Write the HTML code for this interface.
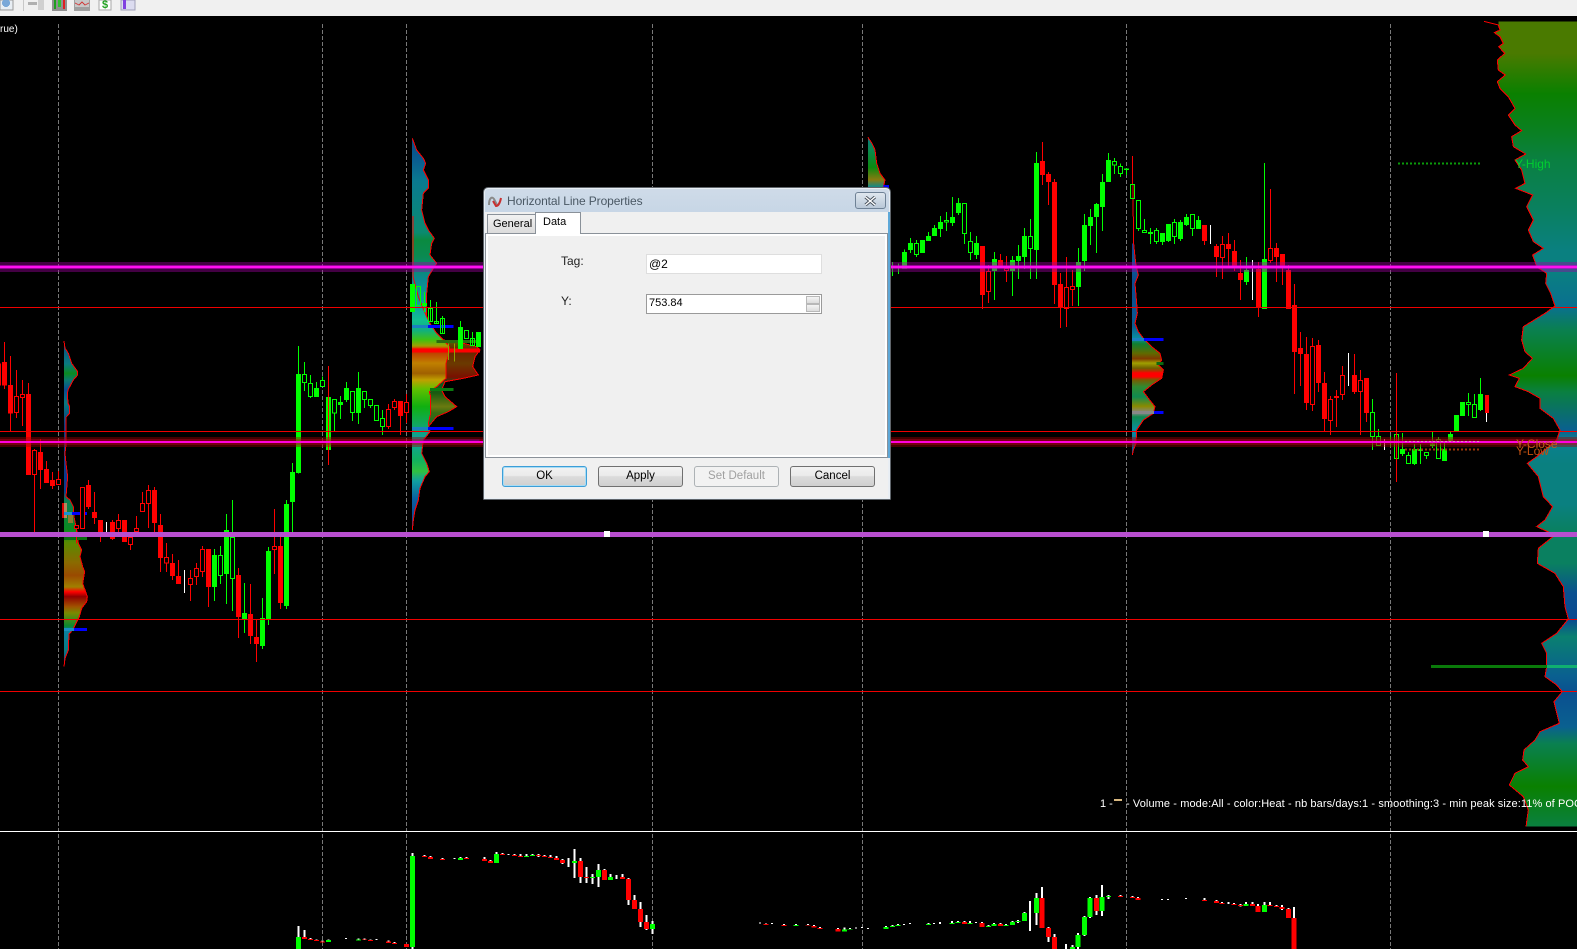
<!DOCTYPE html>
<html><head><meta charset="utf-8"><title>Chart</title>
<style>
html,body{margin:0;padding:0;background:#000;width:1577px;height:949px;overflow:hidden;font-family:"Liberation Sans",sans-serif}
#c{position:absolute;left:0;top:0}
path{fill:none}
polyline{fill:none;stroke:#f00;stroke-width:3}
.gw{stroke:#0f0;stroke-width:3}.rw{stroke:#f00;stroke-width:3}.ww{stroke:#fff;stroke-width:3}
.gb{stroke:#0f0;stroke-width:15}.rb{stroke:#f00;stroke-width:15}
.gh{stroke:#0f0;stroke-width:3;fill:#000}.rh{stroke:#f00;stroke-width:3;fill:#000}
.gn{stroke:#0f0;stroke-width:3;fill:none}
.a{position:absolute;box-sizing:border-box}
.btn{position:absolute;box-sizing:border-box;top:466px;height:21px;width:85px;border:1px solid #707070;border-radius:3px;background:linear-gradient(#f2f2f2 0%,#ebebeb 45%,#dcdcdc 50%,#cfcfcf 100%);font-size:11.5px;text-align:center;line-height:18px;color:#000}
</style></head><body>
<svg id="c" width="1577" height="949" viewBox="0 0 1577 949" shape-rendering="crispEdges" xmlns="http://www.w3.org/2000/svg">
<defs>
<linearGradient id="p1" gradientUnits="userSpaceOnUse" x1="0" y1="33" x2="0" y2="1010">
<stop offset="0" stop-color="#0a4a80"/><stop offset=".07" stop-color="#0a7a80"/><stop offset=".1" stop-color="#0b8a20"/><stop offset=".12" stop-color="#0a7a70"/><stop offset=".15" stop-color="#0a4a90"/><stop offset=".19" stop-color="#0a7a80"/><stop offset=".26" stop-color="#0a3a80"/><stop offset=".46" stop-color="#0a3a90"/><stop offset=".49" stop-color="#0a8050"/><stop offset=".58" stop-color="#0a8a20"/><stop offset=".62" stop-color="#5a8a00"/><stop offset=".68" stop-color="#8a6a00"/><stop offset=".72" stop-color="#9a4a00"/><stop offset=".755" stop-color="#a08000"/><stop offset=".77" stop-color="#ff0000"/><stop offset=".785" stop-color="#900000"/><stop offset=".815" stop-color="#a05000"/><stop offset=".835" stop-color="#7a8a00"/><stop offset=".875" stop-color="#0a8a30"/><stop offset=".89" stop-color="#0a80a0"/><stop offset=".95" stop-color="#0a7a80"/><stop offset="1" stop-color="#0a4a90"/>
</linearGradient>
<linearGradient id="p2" gradientUnits="userSpaceOnUse" x1="0" y1="25" x2="0" y2="1200">
<stop offset="0" stop-color="#0a4a80"/><stop offset=".05" stop-color="#0a5a90"/><stop offset=".11" stop-color="#0a7a90"/><stop offset=".24" stop-color="#0a8a70"/><stop offset=".26" stop-color="#0a8a40"/><stop offset=".3" stop-color="#0a8a50"/><stop offset=".36" stop-color="#0a8a90"/><stop offset=".43" stop-color="#10a0a0"/><stop offset=".463" stop-color="#10c090"/><stop offset=".49" stop-color="#10b080"/><stop offset=".515" stop-color="#40c010"/><stop offset=".53" stop-color="#a0a000"/><stop offset=".54" stop-color="#ff0000"/><stop offset=".548" stop-color="#c04000"/><stop offset=".574" stop-color="#c08000"/><stop offset=".6" stop-color="#a06000"/><stop offset=".617" stop-color="#c0a000"/><stop offset=".64" stop-color="#60c000"/><stop offset=".685" stop-color="#10b010"/><stop offset=".73" stop-color="#10a860"/><stop offset=".77" stop-color="#10a0a0"/><stop offset=".82" stop-color="#10b060"/><stop offset=".85" stop-color="#30c040"/><stop offset=".875" stop-color="#10a0a0"/><stop offset=".92" stop-color="#0a60a0"/><stop offset="1" stop-color="#0a3a90"/>
</linearGradient>
<linearGradient id="p2b" gradientUnits="userSpaceOnUse" x1="0" y1="630" x2="0" y2="900">
<stop offset="0" stop-color="#556a00"/><stop offset=".11" stop-color="#6a2000"/><stop offset=".26" stop-color="#6a3a00"/><stop offset=".41" stop-color="#7a1000"/><stop offset=".48" stop-color="#0a5a20"/><stop offset=".59" stop-color="#1a5a10"/><stop offset=".74" stop-color="#6a7a10"/><stop offset=".81" stop-color="#3a6a10"/><stop offset="1" stop-color="#0a6a30"/>
</linearGradient>
<linearGradient id="p3" gradientUnits="userSpaceOnUse" x1="0" y1="22" x2="0" y2="172">
<stop offset="0" stop-color="#0a7a80"/><stop offset=".25" stop-color="#0a8a50"/><stop offset=".6" stop-color="#0a8a10"/><stop offset=".85" stop-color="#8a7a10"/><stop offset="1" stop-color="#0a8a90"/>
</linearGradient>
<linearGradient id="p4" gradientUnits="userSpaceOnUse" x1="0" y1="280" x2="0" y2="915">
<stop offset="0" stop-color="#0a3a90"/><stop offset=".095" stop-color="#0a5a90"/><stop offset=".19" stop-color="#0a4a90"/><stop offset=".39" stop-color="#0a5a90"/><stop offset=".45" stop-color="#0a90a0"/><stop offset=".475" stop-color="#108030"/><stop offset=".52" stop-color="#606a00"/><stop offset=".545" stop-color="#803a00"/><stop offset=".566" stop-color="#a0a000"/><stop offset=".59" stop-color="#706000"/><stop offset=".615" stop-color="#ff0000"/><stop offset=".63" stop-color="#ff0000"/><stop offset=".645" stop-color="#7a5a00"/><stop offset=".677" stop-color="#308a30"/><stop offset=".725" stop-color="#108a50"/><stop offset=".77" stop-color="#8a8a00"/><stop offset=".8" stop-color="#888888"/><stop offset=".82" stop-color="#108a50"/><stop offset=".88" stop-color="#0a90a0"/><stop offset="1" stop-color="#0a4a90"/>
</linearGradient>
<linearGradient id="p5" gradientUnits="userSpaceOnUse" x1="0" y1="34" x2="0" y2="2450">
<stop offset="0" stop-color="#4a7a00"/><stop offset=".04" stop-color="#4a7a00"/><stop offset=".09" stop-color="#0a8000"/><stop offset=".135" stop-color="#0a8020"/><stop offset=".17" stop-color="#0a8040"/><stop offset=".235" stop-color="#0a8060"/><stop offset=".285" stop-color="#0a8080"/><stop offset=".31" stop-color="#0a8080"/><stop offset=".354" stop-color="#0a7090"/><stop offset=".383" stop-color="#0a8050"/><stop offset=".44" stop-color="#0a8000"/><stop offset=".46" stop-color="#0a8040"/><stop offset=".508" stop-color="#0a6090"/><stop offset=".52" stop-color="#0a8090"/><stop offset=".55" stop-color="#0a8080"/><stop offset=".6" stop-color="#0a8080"/><stop offset=".633" stop-color="#0a8060"/><stop offset=".673" stop-color="#0a8060"/><stop offset=".71" stop-color="#0a5090"/><stop offset=".743" stop-color="#0a4a90"/><stop offset=".764" stop-color="#0a8070"/><stop offset=".813" stop-color="#0a6090"/><stop offset=".835" stop-color="#0a5090"/><stop offset=".876" stop-color="#0a6090"/><stop offset=".897" stop-color="#0a8050"/><stop offset=".95" stop-color="#0a8000"/><stop offset="1" stop-color="#0a8040"/>
</linearGradient>
</defs>

<!-- vertical dashed -->
<path d="M58.5 24V949M322.5 24V949M406.5 24V949M652.5 24V949M862.5 24V949M1126.5 24V949M1390.5 24V949" stroke="#787878" stroke-width="1" stroke-dasharray="4 2"/>

<!-- profile 5 right -->
<g transform="translate(1400,10) scale(.33333)">
<polygon fill="url(#p5)" points="295,34 295,45 300,60 283,68 300,80 310,100 296,110 314,130 292,150 295,180 316,195 292,215 300,235 325,260 345,295 325,315 345,345 365,362 335,380 340,410 377,432 345,450 365,480 375,520 347,535 398,555 380,590 400,630 385,660 400,695 430,715 398,735 410,770 440,790 437,820 452,850 465,888 435,910 370,950 365,990 375,1025 397,1045 370,1075 328,1095 358,1105 345,1130 385,1145 420,1165 420,1195 460,1225 480,1260 470,1290 410,1340 382,1360 415,1400 430,1460 458,1490 435,1530 410,1550 465,1575 415,1615 412,1660 465,1690 490,1730 495,1790 505,1827 470,1870 425,1900 440,1930 440,1970 435,2000 470,2025 487,2045 462,2075 478,2140 420,2165 405,2190 372,2220 368,2250 385,2270 345,2290 328,2325 370,2360 385,2400 378,2450 540,2450 540,34"/>
<polyline points="252,34 295,45 300,60 283,68 300,80 310,100 296,110 314,130 292,150 295,180 316,195 292,215 300,235 325,260 345,295 325,315 345,345 365,362 335,380 340,410 377,432 345,450 365,480 375,520 347,535 398,555 380,590 400,630 385,660 400,695 430,715 398,735 410,770 440,790 437,820 452,850 465,888 435,910 370,950 365,990 375,1025 397,1045 370,1075 328,1095 358,1105 345,1130 385,1145 420,1165 420,1195 460,1225 480,1260 470,1290 410,1340 382,1360 415,1400 430,1460 458,1490 435,1530 410,1550 465,1575 415,1615 412,1660 465,1690 490,1730 495,1790 505,1827 470,1870 425,1900 440,1930 440,1970 435,2000 470,2025 487,2045 462,2075 478,2140 420,2165 405,2190 372,2220 368,2250 385,2270 345,2290 328,2325 370,2360 385,2400 378,2450"/>
</g>

<!-- profile 1 -->
<g transform="translate(0,330) scale(.33333)">
<path d="M193 519V564" stroke="#e00000" stroke-width="15"/>
<polygon fill="url(#p1)" points="192,33 195,54 205,70 215,100 233,125 233,135 220,150 205,178 202,190 204,220 209,230 209,250 198,262 198,345 195,370 198,400 203,440 198,500 210,510 220,530 222,560 230,600 235,640 245,660 240,680 248,710 254,725 248,760 255,780 262,800 260,815 245,835 238,860 228,880 218,900 207,912 205,960 195,985 192,1010"/>
<polyline points="192,33 195,54 205,70 215,100 233,125 233,135 220,150 205,178 202,190 204,220 209,230 209,250 198,262 198,345 195,370 198,400 203,440 198,500 210,510 220,530 222,560 230,600 235,640 245,660 240,680 248,710 254,725 248,760 255,780 262,800 260,815 245,835 238,860 228,880 218,900 207,912 205,960 195,985 192,1010"/>
<rect x="192" y="519" width="9" height="45" fill="#b08a60"/>
<rect x="204" y="555" width="15" height="24" fill="#8a7a30"/>
<rect x="192" y="546" width="69" height="9" fill="#0000ff"/>
<rect x="192" y="546" width="24" height="9" fill="#1a90d0"/>
<rect x="192" y="894" width="69" height="9" fill="#0000ff"/>
<rect x="192" y="894" width="30" height="9" fill="#1a90c0"/>
<rect x="192" y="621" width="69" height="9" fill="#0a6a10"/>
<path class="rw" d="M13 36V177M31 78V303M49 120V264M67 150V288M85 159V435M103 357V606M121 327V477M139 393V459M157 426V477M175 423V465M229 585V640M247 471V597M265 450V537M283 486V582M301 570V636M337 570V630M355 552V606M391 621V660M409 558V606M427 486V545M445 465V594M463 471V606M481 552V726M499 639V726M517 672V750M535 690V762M571 720V813M589 699V765M607 648V741M625 657V831M715 714V924M751 762V942M769 870V996M823 537V732M841 621V837"/>
<path class="rb" d="M-5 100V167M13 96V167M31 165V251M85 192V435M121 366V420M139 417V459M157 450V468M265 465V531M283 546V564M301 570V606M337 576V627M373 570V636M463 480V579M481 585V684M517 699V738M535 738V762M625 657V771M715 735V861M751 852V918M769 921V942M841 648V819"/>
<path class="rh" d="M43 200h12v47h-12zM61 194h12v8h-12zM97 362h12v71h-12zM169 448h12v16h-12zM223 586h12v10h-12zM241 472h12v124h-12zM349 571h12v25h-12zM385 622h12v22h-12zM403 595h12v10h-12zM421 520h12v24h-12zM439 481h12v39h-12zM493 682h12v17h-12zM565 745h12v19h-12zM583 715h12v25h-12zM601 658h12v67h-12zM817 649h12v10h-12z"/>
<path class="gw" d="M643 657V813M661 648V762M679 552V822M697 510V843M733 759V909M787 804V957M805 651V885M859 510V837M877 399V606M895 48V430"/>
<path class="gb" d="M643 675V771M679 600V732M733 849V867M787 864V948M805 663V867M859 522V828M877 426V516M895 132V429"/>
<path class="gh" d="M655 676h12v61h-12zM691 622h12v124h-12z"/>
<path class="ww" d="M319 576V606M553 720V789"/>
</g>

<!-- profile 2 & chart -->
<g transform="translate(290,130) scale(.33333)">
<polygon fill="url(#p2b)" stroke="#f00" stroke-width="3" points="420,630 460,630 520,640 560,650 570,660 555,680 548,710 565,735 520,745 465,755 455,780 465,800 500,830 475,845 440,860 415,890 420,630"/>
<polygon fill="url(#p2)" points="367,25 380,60 400,85 407,100 400,120 415,150 415,175 400,190 395,240 405,280 415,300 433,325 425,340 420,375 440,400 430,415 415,440 410,490 410,560 420,580 440,610 460,630 478,650 478,665 468,700 468,745 440,770 418,785 422,800 422,850 415,880 420,905 400,930 395,970 410,1000 418,1025 405,1040 390,1075 385,1110 375,1140 370,1170 367,1200 366,1200 366,25"/>
<polyline points="367,25 380,60 400,85 407,100 400,120 415,150 415,175 400,190 395,240 405,280 415,300 433,325 425,340 420,375 440,400 430,415 415,440 410,490 410,560 420,580 440,610 460,630 478,650 478,665 468,700 468,745 440,770 418,785 422,800 422,850 415,880 420,905 400,930 395,970 410,1000 418,1025 405,1040 390,1075 385,1110 375,1140 370,1170 367,1200"/>
<path d="M369 258V440L385 500 410 560" stroke="#f00" stroke-width="3" shape-rendering="auto"/>
<rect x="366" y="585" width="124" height="9" fill="#0000ff"/><rect x="366" y="585" width="48" height="9" fill="#1a80c0"/>
<rect x="440" y="630" width="128" height="9" fill="#2a6a10"/>
<rect x="366" y="656" width="204" height="11" fill="#ff0000"/>
<rect x="420" y="774" width="70" height="9" fill="#0a7a10"/>
<rect x="366" y="891" width="124" height="9" fill="#0000ff"/><rect x="366" y="891" width="48" height="9" fill="#1a80c0"/>
<rect x="366" y="928" width="202" height="9" fill="#0000ff"/><rect x="366" y="928" width="34" height="9" fill="#10a0e0"/>
<path class="gw" d="M43 696V783M61 735V804M79 756V801M97 740V771M133 850V903M151 798V867M169 756V816M187 783V873M205 726V882M223 783V834M241 807V834M259 825V872M277 840V915"/>
<path class="gb" d="M79 774V801M115 801V960M151 816V825M169 774V810M205 774V849"/>
<path class="gh" d="M37 733h12v25h-12zM55 760h12v40h-12zM91 751h12v19h-12zM127 808h12v41h-12zM181 784h12v63h-12zM217 784h12v25h-12zM235 808h12v19h-12zM253 826h12v45h-12zM271 865h12v25h-12z"/>
<path class="rw" d="M115 708V1005M295 822V897M313 807V840M331 813V915M349 792V879"/>
<path class="rb" d="M331 813V858"/>
<path class="rh" d="M289 838h12v52h-12zM307 814h12v19h-12zM343 817h12v31h-12z"/>
<path class="gb" d="M367 462V546M403 519V528M511 591V657M565 606V651"/>
<path class="gn" d="M403 486V546M421 510V576M439 516V582M457 558V612M511 573V657M547 606V648M379 469h12v58h-12zM415 535h12v40h-12zM433 574h12v7h-12zM451 565h12v46h-12zM523 601h12v25h-12zM541 625h12v22h-12z"/>
<path d="M475 640V690M493 640V695" stroke="#90a000" stroke-width="3"/>
</g>

<!-- profile 3 + centre chart -->
<g transform="translate(860,130) scale(.33333)">
<polygon fill="url(#p3)" points="24,22 36,40 45,60 50,100 60,130 75,150 70,172 24,172"/>
<polyline points="24,22 36,40 45,60 50,100 60,130 75,150 70,172"/>
<rect x="70" y="165" width="17" height="9" fill="#0000ff"/>
<path class="gw" d="M97 396V438M115 400V432M133 358V415M151 324V369M169 330V381M205 306V333M223 285V318M241 258V321M259 246V303M277 201V288M295 204V255M313 219V342M331 306V390M349 318V387M403 366V510M457 378V498M475 345V447M493 294V417M511 267V447M529 66V447M655 354V528M673 252V423M691 237V345M709 219V369M727 132V303M745 69V156M763 84V132M781 100V141M799 115V135M835 210V303M853 267V309M871 294V342M889 294V342"/>
<path class="gb" d="M133 366V415M151 339V360M187 330V369M205 318V333M223 294V318M241 276V297M277 261V279M295 219V249M349 339V375M403 387V423M457 390V423M475 378V393M493 318V381M529 99V360M655 396V471M673 285V393M691 261V288M709 222V261M727 156V231M745 90V156M799 115V120M871 306V312"/>
<path class="gh" d="M163 340h12v34h-12zM253 271h12v5h-12zM307 220h12v91h-12zM325 334h12v34h-12zM505 319h12v37h-12zM757 95h12v10h-12zM775 109h12v22h-12zM829 211h12v85h-12zM847 301h12v7h-12zM883 301h12v34h-12z"/>
<path class="rw" d="M367 348V537M385 405V519M421 372V411M439 378V456M547 36V165M565 126V225M583 147V522M601 429V594M619 381V591M637 420V528"/>
<path class="rb" d="M367 348V495M421 390V411M547 93V135M565 132V156M583 156V465M601 462V531"/>
<path class="rh" d="M379 424h12v61h-12zM433 415h12v7h-12zM613 472h12v64h-12zM631 469h12v10h-12z"/>
</g>

<!-- profile 4 + right chart -->
<g transform="translate(1120,150) scale(.33333)">
<polygon fill="url(#p4)" points="37,280 41,280 47,340 55,375 45,400 50,460 52,490 45,520 55,545 70,565 95,590 120,610 125,630 115,645 130,660 125,685 95,705 70,725 85,745 105,770 100,790 70,810 50,840 48,880 40,900 37,915 36,915 36,280"/>
<polyline points="37,18 41,280 47,340 55,375 45,400 50,460 52,490 45,520 55,545 70,565 95,590 120,610 125,630 115,645 130,660 125,685 95,705 70,725 85,745 105,770 100,790 70,810 50,840 48,880 40,900 37,915"/>
<rect x="36" y="564" width="94" height="9" fill="#0000ff"/><rect x="36" y="564" width="36" height="9" fill="#1a80c0"/>
<rect x="110" y="636" width="20" height="9" fill="#0a6a10"/>
<rect x="36" y="668" width="92" height="9" fill="#ff0000"/>
<rect x="36" y="783" width="94" height="9" fill="#0000ff"/><rect x="36" y="783" width="66" height="9" fill="#888888"/>
<path class="gn" d="M31 103h12v43h-12z"/>
<path class="gw" d="M127 249V285M145 222V276M163 207V282M181 210V273M199 192V228M217 192V258M235 198V237M379 321V405M433 39V477M757 747V900M775 837V888M811 858V890M847 849V918M865 906V942M883 882V945M901 882V942M919 906V927M937 846V894M955 861V927M973 876V933M991 846V876M1045 729V798M1063 732V804M1081 684V783"/>
<path class="gb" d="M127 249V276M145 222V273M181 216V267M199 201V225M235 210V237M379 360V396M433 327V477M847 897V912M883 897V942M901 897V903M937 880V888M973 897V933M991 852V876M1009 795V843M1027 756V798M1081 732V780"/>
<path class="gh" d="M157 217h12v43h-12zM211 193h12v43h-12zM751 787h12v73h-12zM769 859h12v28h-12zM823 853h12v73h-12zM859 916h12v25h-12zM913 907h12v10h-12zM949 868h12v58h-12zM1039 757h12v7h-12zM1057 763h12v40h-12z"/>
<path class="rw" d="M253 225V285M289 282V381M307 258V387M325 249V348M343 270V363M361 330V450M415 336V501M451 117V339M469 279V396M487 312V405M505 345V477M523 402V732M541 546V708M559 561V780M577 564V783M595 570V726M613 666V844M631 738V855M649 720V831M667 648V750M703 612V732M721 660V855M739 684V816M829 669V996"/>
<path class="rb" d="M253 225V273M289 288V321M325 282V297M343 303V348M361 369V390M415 357V474M469 294V321M487 312V354M505 360V477M523 465V606M541 594V612M559 612V759M595 585V699M613 699V807M649 738V744M703 675V726M739 684V789"/>
<path d="M1101 735V789" stroke="#f00" stroke-width="12"/>
<path class="rh" d="M301 283h12v40h-12zM445 295h12v37h-12zM571 589h12v175h-12zM625 748h12v64h-12zM661 676h12v58h-12zM715 691h12v34h-12z"/>
<path class="ww" d="M271 225V282M397 330V450M685 609V708M793 867V900M1099 789V816"/>
<path d="M433 327V477" stroke="#0f0" stroke-width="15"/>
</g>

<!-- horizontal red lines -->
<path d="M0 307.5H1577M0 431.5H1577M0 619.5H1577M0 691.5H1577" stroke="#f00000" stroke-width="1"/>
<!-- dotted levels -->
<path d="M1398 163.5H1480" stroke="#0a9a0a" stroke-width="2" stroke-dasharray="2 2"/>
<path d="M1405 449.5H1480" stroke="#a03808" stroke-width="2" stroke-dasharray="2 2"/>
<!-- glow magenta -->
<rect x="0" y="262" width="1577" height="10" fill="#a000a0" opacity=".42"/>
<rect x="0" y="265" width="1577" height="4" fill="#e000e0" opacity=".55"/>
<rect x="0" y="266" width="1577" height="2" fill="#ff10f0"/>
<rect x="0" y="437" width="1577" height="10" fill="#a00000" opacity=".42"/>
<rect x="0" y="439" width="1577" height="6" fill="#c00020" opacity=".4"/>
<rect x="0" y="441" width="1577" height="2" fill="#ff00e0"/>
<path d="M1405 441.5H1480" stroke="#e090c0" stroke-width="1" stroke-dasharray="2 2"/>
<!-- green line -->
<rect x="1431" y="665" width="146" height="3" fill="#0a7a0a"/>
<rect x="1547" y="665" width="30" height="3" fill="#10b070"/>
<!-- purple line -->
<rect x="0" y="532" width="1577" height="5" fill="#b84fcf"/>
<rect x="604" y="531" width="6" height="6" fill="#fff"/>
<rect x="1483" y="531" width="6" height="6" fill="#fff"/>
<!-- pane separator -->
<rect x="0" y="831" width="1577" height="1" fill="#ffffff"/>

<!-- lower pane left -->
<g transform="translate(280,820) scale(.33333)">
<path d="M55 318V351M73 330V351M91 354V357M109 358V360M127 361V364M145 358V360M198 354V357M235 355V358M253 356V358M271 358V360M289 357V360M325 361V364M343 366V369M397 99V387M433 105V108M451 108V111M487 114V117M523 114V117M541 111V114M559 111V114M613 111V117M631 120V123M649 96V102M667 99V102M685 102V105M703 102V105M721 102V108M739 102V108M757 102V105M775 102V111M793 105V108M811 105V111M829 108V114M847 117V132M865 114V141M883 87V174M901 114V189M919 141V189M937 162V192M955 132V201M973 147V150M991 162V180M1009 165V177M1027 162V171M1045 174V255M1063 225V240M1081 246V321M1099 285V330M1117 303V342" stroke="#fff" stroke-width="6"/>
<path class="rb" d="M73 351V357M91 357V360M109 360V363M127 364V367M253 358V360M271 360V363M325 364V369M343 369V372M379 372V381M433 108V111M451 111V117M487 117V120M559 114V117M613 117V123M631 123V129M667 102V105M703 105V108M721 108V111M775 105V108M793 108V111M811 111V114M829 114V120M847 120V129M901 123V171M919 171V174M973 150V180M1027 171V177M1045 177V240M1063 240V267M1081 267V306M1099 306V327"/>
<path class="gb" d="M55 351V387M145 360V366M235 358V361M397 108V381M541 114V120M649 102V129M739 108V111M757 105V108M883 123V129M937 171V174M955 150V171M991 171V180M1117 312V327"/>
</g>
<!-- lower pane right -->
<g transform="translate(740,820) scale(.36364,.33333)">
<path d="M55 308V311M72 310V312M88 309V312M121 312V315M154 312V315M187 312V315M204 315V318M220 321V324M270 324V327M287 323V329M303 324V327M319 323V326M336 321V324M352 324V327M402 318V321M419 315V318M435 312V315M451 312V315M468 309V312M518 309V312M534 309V312M550 306V312M583 303V309M600 303V306M617 303V306M633 303V309M649 306V309M666 306V309M683 315V318M699 309V312M716 309V312M732 312V315M749 303V306M765 300V309M782 276V279M798 243V333M815 219V315M831 201V324M848 321V366M865 342V351M897 372V387M914 375V381M930 339V387M947 288V348M963 231V294M980 225V285M996 195V288M1013 225V237M1046 225V228M1079 228V231M1095 231V234M1161 237V240M1177 237V240M1227 234V237M1277 234V240M1310 240V243M1326 246V249M1343 246V252M1359 249V252M1376 252V260M1392 246V252M1409 246V252M1425 252V258M1442 246V255M1458 246V255M1475 255V258M1491 255V270M1508 264V267M1524 261V294" stroke="#fff" stroke-width="5.5"/>
<path d="M72 312V315M121 315V318M187 315V317M204 318V323M220 324V327M270 327V335M617 306V312M666 309V321M716 312V318M831 234V324M848 324V351M865 351V387M980 234V273M1046 228V231M1079 231V234M1095 234V240M1277 240V243M1310 243V249M1326 249V252M1359 252V255M1376 255V258M1409 252V258M1425 258V276M1458 255V258M1475 258V261M1491 261V267M1508 267V294M1524 294V387" stroke="#f00" stroke-width="14"/>
<path d="M154 315V318M287 329V335M303 327V329M402 321V327M419 318V321M435 315V318M518 312V315M583 309V312M600 306V309M633 309V312M683 318V321M699 312V318M732 315V318M749 306V315M765 303V306M782 279V303M815 234V279M914 381V387M930 345V381M947 291V345M963 234V291M996 231V273M1013 228V231M1392 252V258M1442 255V276" stroke="#0f0" stroke-width="14"/>
</g>

<!-- Toolbar -->
<rect x="0" y="0" width="1577" height="16" fill="#f0f0f0"/>
<rect x="0" y="0" width="13" height="10" fill="#e8eef4" stroke="#9a9a9a" stroke-width="1"/>
<circle cx="6" cy="3" r="4" fill="#7aa8d8"/>
<rect x="23" y="0" width="1" height="11" fill="#c8c8c8"/>
<rect x="28" y="2" width="9" height="3" fill="#b0b0b0"/><rect x="38" y="0" width="6" height="10" fill="#d0d0d0"/>
<rect x="52" y="0" width="15" height="11" fill="#909090"/><rect x="54" y="0" width="2" height="9" fill="#20a020"/><rect x="58" y="0" width="3" height="7" fill="#30c030"/><rect x="63" y="0" width="2" height="9" fill="#e02020"/>
<rect x="74" y="0" width="16" height="11" fill="#a0a0a0"/><rect x="75" y="0" width="14" height="7" fill="#c8c8c8"/><path d="M75 3L79 5 82 2 85 5 89 3" stroke="#d04040" stroke-width="1"/>
<rect x="99" y="0" width="12" height="10" fill="#fdfdfd" stroke="#a8a8a8" stroke-width="1"/>
<rect x="121" y="0" width="14" height="10" fill="#dcdcf0" stroke="#a0a0b8" stroke-width="1"/><rect x="123" y="0" width="3" height="9" fill="#8040e0"/>
<text x="105" y="8" font-family="Liberation Sans" font-size="11" font-weight="bold" fill="#20a020" text-anchor="middle" shape-rendering="auto">$</text>
<text x="0" y="32" font-family="Liberation Sans" font-size="10" fill="#fff">rue)</text>

<!-- labels -->
<text x="1515" y="168" font-family="Liberation Sans" font-size="12" fill="#00d030">Y-High</text>
<text x="1516" y="448" font-family="Liberation Sans" font-size="12" fill="#c06018">Y-Close</text>
<text x="1516" y="455" font-family="Liberation Sans" font-size="12" fill="#c05010">Y-Low</text>
<text x="1100" y="807" font-family="Liberation Sans" font-size="11" fill="#fff">1 -</text>
<rect x="1114" y="799" width="8" height="2" fill="#d8b880"/>
<text x="1126" y="807" font-family="Liberation Sans" font-size="11" fill="#fff" textLength="456" lengthAdjust="spacing">- Volume - mode:All  - color:Heat - nb bars/days:1 - smoothing:3 - min peak size:11% of POC</text>
</svg>

<!-- Dialog -->
<div class="a" style="left:483px;top:187px;width:408px;height:313px;background:linear-gradient(#cfdbe8 0,#c7d6e6 25px,#e9eef4 25px);border:1px solid #5f656b;border-radius:5px 5px 1px 1px;box-shadow:inset 0 0 0 1px #e8eef4"></div>
<div class="a" style="left:888px;top:212px;width:2px;height:246px;background:#5ea8d8"></div>
<div class="a" style="left:485px;top:212px;width:403px;height:286px;background:#f0f0f0"></div>
<svg class="a" style="left:488px;top:196px" width="16" height="12" viewBox="0 0 16 12"><path d="M1 9C1 2 4 0 6 3L9 9" fill="none" stroke="#8a8a8a" stroke-width="2"/><path d="M5 5L8 10C10 10 12 7 13 2" fill="none" stroke="#c83030" stroke-width="2"/></svg>
<div class="a" style="left:507px;top:193px;font-size:12px;letter-spacing:-.1px;line-height:16px;color:#4a5864;white-space:nowrap">Horizontal Line Properties</div>
<div class="a" style="left:855px;top:192px;width:31px;height:17px;border:1px solid #6f8296;border-radius:3px;background:linear-gradient(#dfe7ef,#b9c8d8)"></div>
<svg class="a" style="left:864px;top:196px" width="13" height="10" viewBox="0 0 13 10"><path d="M1.5 1L11 9M11 1L1.5 9" stroke="#454f5a" stroke-width="3.2" fill="none"/><path d="M1.5 1L11 9M11 1L1.5 9" stroke="#fff" stroke-width="1.4" fill="none"/></svg>
<!-- tabs -->
<div class="a" style="left:487px;top:214px;width:49px;height:20px;background:linear-gradient(#f2f2f2,#dadada);border:1px solid #8a9199;border-bottom:none;font-size:11px;padding:2px 0 0 5px;line-height:15px;color:#000">General</div>
<div class="a" style="left:485px;top:233px;width:403px;height:225px;background:#f0f0f0;border:1px solid #8a9199;box-shadow:inset 0 0 0 3px #fff"></div>
<div class="a" style="left:488px;top:236px;width:397px;height:219px;background:#f0f0f0"></div>
<div class="a" style="left:535px;top:212px;width:46px;height:22px;background:#fff;border:1px solid #8a9199;border-bottom:none;font-size:11px;padding:2px 0 0 7px;line-height:15px;color:#000">Data</div>
<!-- form -->
<div class="a" style="left:561px;top:254px;font-size:12px;line-height:15px;color:#222">Tag:</div>
<div class="a" style="left:646px;top:254px;width:176px;height:20px;background:#fff;border:1px solid #dedede;font-size:12px;padding-left:2px;line-height:19px;color:#000">@2</div>
<div class="a" style="left:561px;top:294px;font-size:12px;line-height:15px;color:#222">Y:</div>
<div class="a" style="left:646px;top:294px;width:176px;height:20px;background:#fff;border:1px solid #9a9a9a;font-size:11px;padding-left:2px;line-height:16px;color:#000">753.84</div>
<div class="a" style="left:806px;top:296px;width:14px;height:8px;background:linear-gradient(#f4f4f4,#dcdcdc);border:1px solid #b8b8b8"></div>
<div class="a" style="left:806px;top:304px;width:14px;height:8px;background:linear-gradient(#f4f4f4,#dcdcdc);border:1px solid #b8b8b8"></div>
<svg class="a" style="left:806px;top:296px" width="14" height="16" viewBox="0 0 14 16"><path d="M7 2L10 6H4zM7 14L10 10H4z" fill="#5a6aa8"/></svg>
<!-- buttons -->
<div class="btn" style="left:502px;border:1px solid #3c9ed8;box-shadow:inset 0 0 0 1px #a8dcf4">OK</div>
<div class="btn" style="left:598px">Apply</div>
<div class="btn" style="left:694px;border-color:#adb2b5;background:#f2f2f2;color:#a0a0a0">Set Default</div>
<div class="btn" style="left:790px">Cancel</div>
</body></html>
